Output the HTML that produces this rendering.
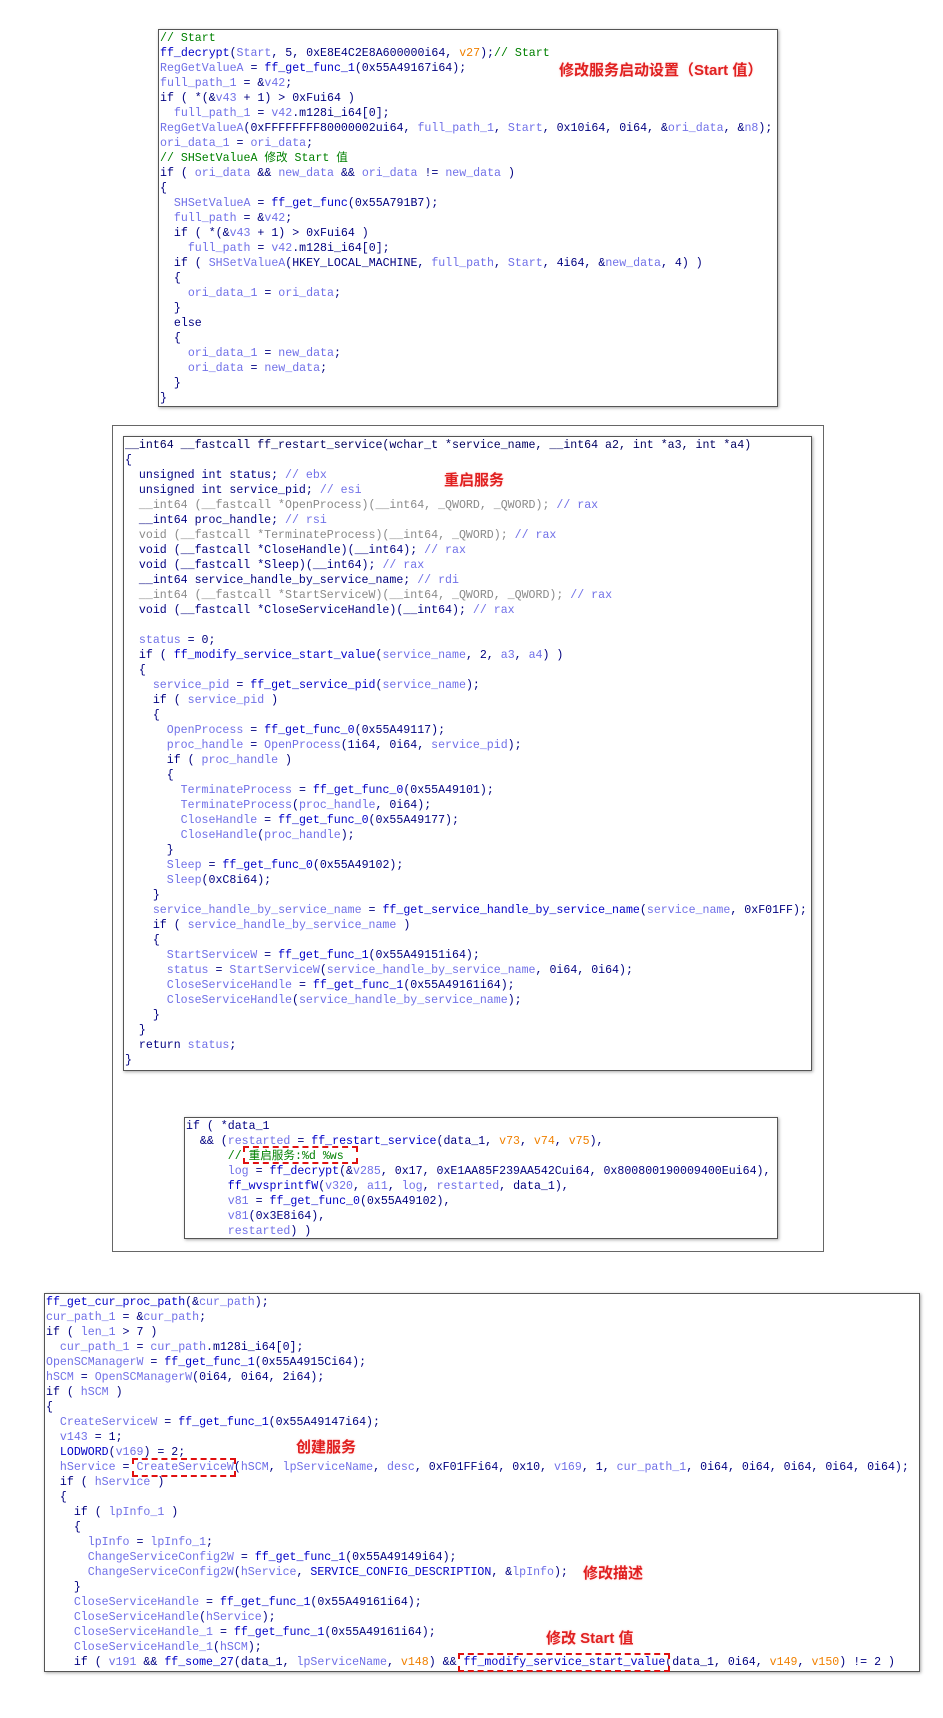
<!DOCTYPE html>
<html><head><meta charset="utf-8">
<style>
html,body{margin:0;padding:0;background:#fff;width:943px;height:1718px;position:relative;overflow:hidden}
.box{position:absolute;background:#fff;border:1px solid #555;box-shadow:1px 1px 3px rgba(0,0,0,.35);overflow:hidden}
.code{font-family:"Liberation Mono","Noto Sans CJK SC",monospace;font-size:11.6px;line-height:15px;white-space:pre;color:#000080;padding:1px 0 0 1px}
.f{color:#0000c8}.v{color:#7070e8}.c{color:#008000}.o{color:#f08000}.g{color:#8a8a8a}.n{color:#000060}
.lab{position:absolute;font-family:"Liberation Sans","Noto Sans CJK SC",sans-serif;font-weight:bold;color:#e02020;font-size:15px;text-shadow:0 0 2px #fcc;white-space:nowrap}
.dash{position:absolute;border:2px dashed #e01010}
</style></head><body>

<div class="box" style="left:158px;top:29px;width:618px;height:376px">
<div class="code"><span class="c">// Start</span>
<span class="f">ff_decrypt</span>(<span class="v">Start</span>, 5, 0xE8E4C2E8A600000i64, <span class="o">v27</span>);<span class="c">// Start</span>
<span class="v">RegGetValueA</span> = <span class="f">ff_get_func_1</span>(0x55A49167i64);
<span class="v">full_path_1</span> = &amp;<span class="v">v42</span>;
if ( *(&amp;<span class="v">v43</span> + 1) &gt; 0xFui64 )
  <span class="v">full_path_1</span> = <span class="v">v42</span>.m128i_i64[0];
<span class="v">RegGetValueA</span>(0xFFFFFFFF80000002ui64, <span class="v">full_path_1</span>, <span class="v">Start</span>, 0x10i64, 0i64, &amp;<span class="v">ori_data</span>, &amp;<span class="v">n8</span>);
<span class="v">ori_data_1</span> = <span class="v">ori_data</span>;
<span class="c">// SHSetValueA 修改 Start 值</span>
if ( <span class="v">ori_data</span> &amp;&amp; <span class="v">new_data</span> &amp;&amp; <span class="v">ori_data</span> != <span class="v">new_data</span> )
{
  <span class="v">SHSetValueA</span> = <span class="f">ff_get_func</span>(0x55A791B7);
  <span class="v">full_path</span> = &amp;<span class="v">v42</span>;
  if ( *(&amp;<span class="v">v43</span> + 1) &gt; 0xFui64 )
    <span class="v">full_path</span> = <span class="v">v42</span>.m128i_i64[0];
  if ( <span class="v">SHSetValueA</span>(HKEY_LOCAL_MACHINE, <span class="v">full_path</span>, <span class="v">Start</span>, 4i64, &amp;<span class="v">new_data</span>, 4) )
  {
    <span class="v">ori_data_1</span> = <span class="v">ori_data</span>;
  }
  else
  {
    <span class="v">ori_data_1</span> = <span class="v">new_data</span>;
    <span class="v">ori_data</span> = <span class="v">new_data</span>;
  }
}</div></div>
<div class="lab" style="left:559px;top:59px">修改服务启动设置（Start 值）</div>

<div class="box" style="left:112px;top:425px;width:710px;height:825px;box-shadow:none;border-color:#666"></div>
<div class="box" style="left:123px;top:436px;width:687px;height:633px">
<div class="code"><span class="n">__int64 __fastcall ff_restart_service(wchar_t *service_name, __int64 a2, int *a3, int *a4)</span>
{
  unsigned int status; <span class="v">// ebx</span>
  unsigned int service_pid; <span class="v">// esi</span>
<span class="g">  __int64 (__fastcall *OpenProcess)(__int64, _QWORD, _QWORD); </span><span class="v">// rax</span>
  __int64 proc_handle; <span class="v">// rsi</span>
<span class="g">  void (__fastcall *TerminateProcess)(__int64, _QWORD); </span><span class="v">// rax</span>
  void (__fastcall *CloseHandle)(__int64); <span class="v">// rax</span>
  void (__fastcall *Sleep)(__int64); <span class="v">// rax</span>
  __int64 service_handle_by_service_name; <span class="v">// rdi</span>
<span class="g">  __int64 (__fastcall *StartServiceW)(__int64, _QWORD, _QWORD); </span><span class="v">// rax</span>
  void (__fastcall *CloseServiceHandle)(__int64); <span class="v">// rax</span>

  <span class="v">status</span> = 0;
  if ( <span class="f">ff_modify_service_start_value</span>(<span class="v">service_name</span>, 2, <span class="v">a3</span>, <span class="v">a4</span>) )
  {
    <span class="v">service_pid</span> = <span class="f">ff_get_service_pid</span>(<span class="v">service_name</span>);
    if ( <span class="v">service_pid</span> )
    {
      <span class="v">OpenProcess</span> = <span class="f">ff_get_func_0</span>(0x55A49117);
      <span class="v">proc_handle</span> = <span class="v">OpenProcess</span>(1i64, 0i64, <span class="v">service_pid</span>);
      if ( <span class="v">proc_handle</span> )
      {
        <span class="v">TerminateProcess</span> = <span class="f">ff_get_func_0</span>(0x55A49101);
        <span class="v">TerminateProcess</span>(<span class="v">proc_handle</span>, 0i64);
        <span class="v">CloseHandle</span> = <span class="f">ff_get_func_0</span>(0x55A49177);
        <span class="v">CloseHandle</span>(<span class="v">proc_handle</span>);
      }
      <span class="v">Sleep</span> = <span class="f">ff_get_func_0</span>(0x55A49102);
      <span class="v">Sleep</span>(0xC8i64);
    }
    <span class="v">service_handle_by_service_name</span> = <span class="f">ff_get_service_handle_by_service_name</span>(<span class="v">service_name</span>, 0xF01FF);
    if ( <span class="v">service_handle_by_service_name</span> )
    {
      <span class="v">StartServiceW</span> = <span class="f">ff_get_func_1</span>(0x55A49151i64);
      <span class="v">status</span> = <span class="v">StartServiceW</span>(<span class="v">service_handle_by_service_name</span>, 0i64, 0i64);
      <span class="v">CloseServiceHandle</span> = <span class="f">ff_get_func_1</span>(0x55A49161i64);
      <span class="v">CloseServiceHandle</span>(<span class="v">service_handle_by_service_name</span>);
    }
  }
  return <span class="v">status</span>;
}</div></div>
<div class="lab" style="left:444px;top:469px">重启服务</div>

<div class="box" style="left:184px;top:1117px;width:592px;height:120px">
<div class="code">if ( *data_1
  &amp;&amp; (<span class="v">restarted</span> = <span class="f">ff_restart_service</span>(data_1, <span class="o">v73</span>, <span class="o">v74</span>, <span class="o">v75</span>),
      <span class="c">// 重启服务:%d %ws</span>
      <span class="v">log</span> = <span class="f">ff_decrypt</span>(&amp;<span class="v">v285</span>, 0x17, 0xE1AA85F239AA542Cui64, 0x800800190009400Eui64),
      <span class="f">ff_wvsprintfW</span>(<span class="v">v320</span>, <span class="v">a11</span>, <span class="v">log</span>, <span class="v">restarted</span>, data_1),
      <span class="v">v81</span> = <span class="f">ff_get_func_0</span>(0x55A49102),
      <span class="v">v81</span>(0x3E8i64),
      <span class="v">restarted</span>) )</div></div>
<div class="dash" style="left:243px;top:1146px;width:111px;height:14px"></div>

<div class="box" style="left:44px;top:1293px;width:874px;height:377px">
<div class="code"><span class="f">ff_get_cur_proc_path</span>(&amp;<span class="v">cur_path</span>);
<span class="v">cur_path_1</span> = &amp;<span class="v">cur_path</span>;
if ( <span class="v">len_1</span> &gt; 7 )
  <span class="v">cur_path_1</span> = <span class="v">cur_path</span>.m128i_i64[0];
<span class="v">OpenSCManagerW</span> = <span class="f">ff_get_func_1</span>(0x55A4915Ci64);
<span class="v">hSCM</span> = <span class="v">OpenSCManagerW</span>(0i64, 0i64, 2i64);
if ( <span class="v">hSCM</span> )
{
  <span class="v">CreateServiceW</span> = <span class="f">ff_get_func_1</span>(0x55A49147i64);
  <span class="v">v143</span> = 1;
  <span class="f">LODWORD</span>(<span class="v">v169</span>) = 2;
  <span class="v">hService</span> = <span class="v">CreateServiceW</span>(<span class="v">hSCM</span>, <span class="v">lpServiceName</span>, <span class="v">desc</span>, 0xF01FFi64, 0x10, <span class="v">v169</span>, 1, <span class="v">cur_path_1</span>, 0i64, 0i64, 0i64, 0i64, 0i64);
  if ( <span class="v">hService</span> )
  {
    if ( <span class="v">lpInfo_1</span> )
    {
      <span class="v">lpInfo</span> = <span class="v">lpInfo_1</span>;
      <span class="v">ChangeServiceConfig2W</span> = <span class="f">ff_get_func_1</span>(0x55A49149i64);
      <span class="v">ChangeServiceConfig2W</span>(<span class="v">hService</span>, <span class="f">SERVICE_CONFIG_DESCRIPTION</span>, &amp;<span class="v">lpInfo</span>);
    }
    <span class="v">CloseServiceHandle</span> = <span class="f">ff_get_func_1</span>(0x55A49161i64);
    <span class="v">CloseServiceHandle</span>(<span class="v">hService</span>);
    <span class="v">CloseServiceHandle_1</span> = <span class="f">ff_get_func_1</span>(0x55A49161i64);
    <span class="v">CloseServiceHandle_1</span>(<span class="v">hSCM</span>);
    if ( <span class="v">v191</span> &amp;&amp; <span class="f">ff_some_27</span>(data_1, <span class="v">lpServiceName</span>, <span class="o">v148</span>) &amp;&amp; <span class="f">ff_modify_service_start_value</span>(data_1, 0i64, <span class="o">v149</span>, <span class="o">v150</span>) != 2 )</div></div>
<div class="lab" style="left:296px;top:1436px">创建服务</div>
<div class="lab" style="left:583px;top:1562px">修改描述</div>
<div class="lab" style="left:546px;top:1627px">修改 Start 值</div>
<div class="dash" style="left:132px;top:1458px;width:100px;height:15px"></div>
<div class="dash" style="left:458px;top:1653px;width:208px;height:15px"></div>
</body></html>
